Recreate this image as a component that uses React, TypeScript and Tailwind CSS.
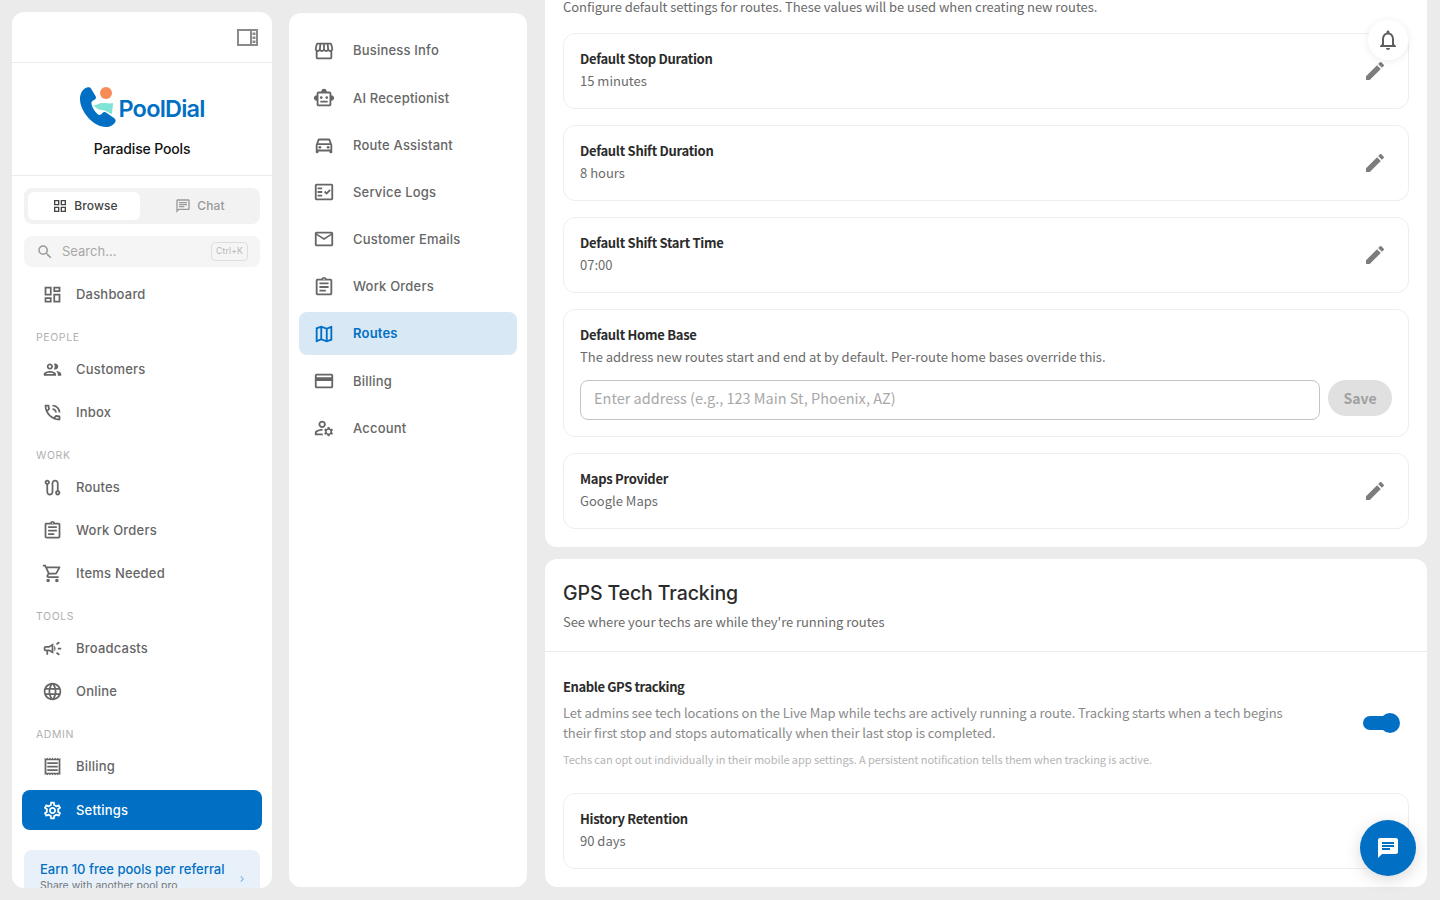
import React from 'react';
import {
  MdChat,
  MdChevronRight,
  MdCreditCard,
  MdEdit,
  MdOutlineAssignment,
  MdOutlineCampaign,
  MdOutlineChat,
  MdOutlineDashboard,
  MdOutlineDirectionsCar,
  MdOutlineFactCheck,
  MdOutlineGridView,
  MdOutlineLanguage,
  MdOutlineMail,
  MdOutlineManageAccounts,
  MdOutlineMap,
  MdOutlineNotifications,
  MdOutlinePeople,
  MdOutlinePhoneInTalk,
  MdOutlineReceipt,
  MdOutlineRoute,
  MdOutlineSettings,
  MdOutlineShoppingCart,
  MdOutlineSmartToy,
  MdOutlineStorefront,
  MdSearch,
} from 'react-icons/md';

const navGroups = [
  { label: 'PEOPLE', items: [{ name: 'Customers', icon: MdOutlinePeople }, { name: 'Inbox', icon: MdOutlinePhoneInTalk }] },
  {
    label: 'WORK',
    items: [
      { name: 'Routes', icon: MdOutlineRoute },
      { name: 'Work Orders', icon: MdOutlineAssignment },
      { name: 'Items Needed', icon: MdOutlineShoppingCart },
    ],
  },
  { label: 'TOOLS', items: [{ name: 'Broadcasts', icon: MdOutlineCampaign }, { name: 'Online', icon: MdOutlineLanguage }] },
];

const settingsNav = [
  { name: 'Business Info', icon: MdOutlineStorefront },
  { name: 'AI Receptionist', icon: MdOutlineSmartToy },
  { name: 'Route Assistant', icon: MdOutlineDirectionsCar },
  { name: 'Service Logs', icon: MdOutlineFactCheck },
  { name: 'Customer Emails', icon: MdOutlineMail },
  { name: 'Work Orders', icon: MdOutlineAssignment },
  { name: 'Routes', icon: MdOutlineMap, active: true },
  { name: 'Billing', icon: MdCreditCard },
  { name: 'Account', icon: MdOutlineManageAccounts },
];

function NavRow({ name, icon: Icon, active }: { name: string; icon: React.ElementType; active?: boolean }) {
  return (
    <a
      className={
        'flex h-10 items-center gap-[13px] rounded-lg px-5 text-[13px] font-medium tracking-[0.2px] ' +
        (active ? 'mt-px bg-[#006fc4] text-white' : 'text-[#666666]')
      }
    >
      <Icon size={21} />
      <span className={active ? 'mt-px' : 'mt-[2px]'}>{name}</span>
    </a>
  );
}

function NavLabel({ children }: { children: React.ReactNode }) {
  return <div className="h-8 pt-[17px] pl-[14px] text-[10.5px] leading-[13px] tracking-[0.6px] text-[#b0b0b0]">{children}</div>;
}

function Logo() {
  return (
    <div className="flex h-[42px] items-center">
      <svg width="40" height="42" viewBox="0 0 40 42" className="mr-[-1px]">
        <path
          d="M8 1.5C4 2.5 1 7 1 13C1 25 14 41 27 41C31 41 35 39 36.5 35.5C37 34 36 33 35 32L27 26.5C25.5 25.5 24 26 23 27.5C22 29 20 29.5 18.5 28C15.5 25 13 21.5 12.5 18C12 16 13 15 15 14C17 13 17.5 11.5 16.5 10L12 2.5C11 1 9.5 1 8 1.5Z"
          fill="#006fc4"
        />
        <circle cx="27" cy="7" r="6" fill="#f58b57" />
        <path d="M14 19C18 20 19 17 24 17C28 17 31 18 34 17C34 21 33 24 33 28C29 27 27 24 23 24C20 24 17 22 14 19Z" fill="#7fe3d6" />
      </svg>
      <span className="mt-[3px] text-[23.5px] leading-none font-semibold tracking-[-0.8px] text-[#006fc4]">PoolDial</span>
    </div>
  );
}

function Sidebar() {
  return (
    <aside className="my-3 flex w-[260px] shrink-0 flex-col overflow-hidden rounded-xl bg-white">
      <div className="flex h-[51px] shrink-0 items-center justify-end border-b border-[#ebebeb] pr-[14px]">
        <svg width="21" height="17" viewBox="0 0 21 17" fill="none">
          <rect x="1" y="1" width="19" height="15" stroke="#8a8a8a" strokeWidth="2" />
          <path d="M14 1V16" stroke="#8a8a8a" strokeWidth="2" />
          <path d="M17 3.5V6M17 7.5V10M17 11.5V14" stroke="#8a8a8a" strokeWidth="3" />
        </svg>
      </div>
      <div className="flex h-[113px] shrink-0 flex-col items-center border-b border-[#ebebeb] pt-[23px]">
        <Logo />
        <div className="mt-[11px] text-sm leading-[20px] font-medium tracking-[-0.15px] text-[#111111]">Paradise Pools</div>
      </div>
      <div className="mx-3 mt-3 flex h-9 shrink-0 items-center rounded-lg bg-[#f2f2f2] px-1">
        <div className="flex h-7 w-[112px] items-center justify-center gap-[6px] rounded-md bg-white pl-[2px] text-xs font-medium tracking-[0.1px] text-[#444444]">
          <MdOutlineGridView size={16} />
          Browse
        </div>
        <div className="flex h-7 flex-1 items-center justify-center gap-[6px] pl-1 text-xs font-medium tracking-[0.1px] text-[#999999]">
          <MdOutlineChat size={16} />
          Chat
        </div>
      </div>
      <div className="mx-3 mt-3 flex h-[31px] shrink-0 items-center rounded-lg bg-[#f5f5f5] pr-3 pl-3 text-[13px] text-[#a8a8a8]">
        <MdSearch size={18} className="text-[#9a9a9a]" />
        <span className="ml-2 flex-1">Search...</span>
        <span className="flex h-[19px] w-[37px] items-center justify-center rounded-[4px] border border-[#dedede] text-[8.5px] tracking-[0.2px] text-[#b5b5b5]">Ctrl+K</span>
      </div>
      <nav className="mx-[10px] mt-[7px] flex shrink-0 flex-col">
        <NavRow name="Dashboard" icon={MdOutlineDashboard} />
        {navGroups.map((group) => (
          <div key={group.label} className="flex flex-col gap-[3px]">
            <NavLabel>{group.label}</NavLabel>
            {group.items.map((item) => (
              <NavRow key={item.name} {...item} />
            ))}
          </div>
        ))}
        <div className="flex flex-col gap-[3px]">
          <NavLabel>ADMIN</NavLabel>
          <NavRow name="Billing" icon={MdOutlineReceipt} />
          <NavRow name="Settings" icon={MdOutlineSettings} active />
        </div>
      </nav>
      <div className="relative mx-3 mt-5 shrink-0 rounded-lg bg-[#e8f1fa] px-4 py-[10px]">
        <div className="text-[13px] leading-[18px] font-medium text-[#006fc4]">Earn 10 free pools per referral</div>
        <div className="text-[10.5px] leading-[16px] text-[#777777]">Share with another pool pro</div>
        <MdChevronRight size={12} className="absolute top-[23px] right-3 text-[#7fb2e0]" />
      </div>
    </aside>
  );
}

function SettingsNav() {
  return (
    <div className="my-[13px] ml-[17px] flex w-[238px] shrink-0 flex-col gap-1 rounded-xl bg-white px-[10px] pt-4">
      {settingsNav.map(({ name, icon: Icon, active }) => (
        <a
          key={name}
          className={
            'flex h-[43.2px] items-center gap-[18px] rounded-lg pl-[14px] text-[13px] tracking-[0.2px] ' +
            (active ? 'bg-[#d9e8f5] font-semibold text-[#006fc4]' : 'font-medium text-[#666666]')
          }
        >
          <Icon size={22} />
          <span className="mt-px">{name}</span>
        </a>
      ))}
    </div>
  );
}

function SettingRow({ title, value }: { title: string; value: string }) {
  return (
    <div className="flex h-[76px] items-center rounded-xl border border-[#eeeeee] pr-[5px] pl-4 text-[13px]">
      <div className="flex-1 pb-[2px]">
        <div className="leading-[22px] font-semibold tracking-[-0.28px] text-[#2b2b2b]">{title}</div>
        <div className="leading-[22px] text-[#6b6b6b]">{value}</div>
      </div>
      <div className="mr-[16px]">
        <MdEdit size={24} className="text-[#7d7d7d]" />
      </div>
    </div>
  );
}

function Main() {
  return (
    <main className="mb-[13px] ml-[18px] w-[882px] shrink-0 overflow-hidden rounded-b-xl font-['Noto_Sans_CJK_JP','Noto_Sans',sans-serif]">
      <section className="rounded-b-xl bg-white px-[18px] pb-[18px]">
        <p className="-mt-[3px] mb-[16px] h-[20px] text-[13px] leading-[20px] tracking-[-0.045px] text-[#6b6b6b]">
          Configure default settings for routes. These values will be used when creating new routes.
        </p>
        <div className="flex flex-col gap-4">
          <SettingRow title="Default Stop Duration" value="15 minutes" />
          <SettingRow title="Default Shift Duration" value="8 hours" />
          <SettingRow title="Default Shift Start Time" value="07:00" />
          <div className="h-[128px] rounded-xl border border-[#eeeeee] px-4 pt-[14px] text-[13px]">
            <div className="leading-[22px] font-semibold tracking-[-0.28px] text-[#2b2b2b]">Default Home Base</div>
            <div className="leading-[22px] tracking-[-0.01px] text-[#6b6b6b]">The address new routes start and end at by default. Per-route home bases override this.</div>
            <div className="mt-3 flex items-start gap-2">
              <div className="flex h-10 flex-1 items-center rounded-lg border border-[#c4c4c4] px-[13px] pb-1 text-[14.5px] leading-[22px] text-[#a8a8a8]">
                Enter address (e.g., 123 Main St, Phoenix, AZ)
              </div>
              <div className="flex h-9 w-16 items-center justify-center rounded-full bg-[#e0e0e0] text-sm font-semibold text-[#a0a0a0]">Save</div>
            </div>
          </div>
          <SettingRow title="Maps Provider" value="Google Maps" />
        </div>
      </section>
      <section className="mt-3 rounded-xl bg-white pb-[18px]">
        <div className="h-[93px] border-b border-[#ebebeb] px-[18px] pt-[19px]">
          <h2 className="font-['Inter',sans-serif] text-[19.5px] leading-[30px] font-medium tracking-[-0.1px] text-[#2b2b2b]">GPS Tech Tracking</h2>
          <p className="mt-[4px] text-[13px] leading-[20px] tracking-[-0.05px] text-[#6b6b6b]">See where your techs are while they're running routes</p>
        </div>
        <div className="px-[18px] pt-[25px]">
          <div className="flex">
            <div className="w-[730px]">
              <div className="text-[13px] leading-[20px] font-semibold tracking-[-0.4px] text-[#2b2b2b]">Enable GPS tracking</div>
              <p className="mt-[6px] text-[13px] leading-[20px] tracking-[-0.076px] text-[#8a8a8a]">
                Let admins see tech locations on the Live Map while techs are actively running a route. Tracking starts when a tech begins their first stop and stops automatically when their last stop is completed.
              </p>
              <p className="mt-[7px] whitespace-nowrap text-[11px] leading-[18px] tracking-[-0.07px] text-[#b5b5b5]">
                Techs can opt out individually in their mobile app settings. A persistent notification tells them when tracking is active.
              </p>
            </div>
            <div className="relative mt-[39px] ml-[70px] h-[14px] w-[34px] rounded-full bg-[#006fc4]">
              <div className="absolute -top-[3px] -right-[3px] size-5 rounded-full bg-[#006fc4]" />
            </div>
          </div>
          <div className="mt-[25px]">
            <SettingRow title="History Retention" value="90 days" />
          </div>
        </div>
      </section>
    </main>
  );
}

export default function App() {
  return (
    <div className="relative flex h-[900px] w-[1440px] overflow-hidden bg-[#ebebeb] pl-3 font-['Inter',sans-serif]">
      <Sidebar />
      <SettingsNav />
      <Main />
      <button className="absolute top-5 left-[1368px] flex size-10 items-center justify-center rounded-full bg-white text-[#5f5f5f] shadow-[0_1px_8px_rgba(0,0,0,0.08)]">
        <MdOutlineNotifications size={24} />
      </button>
      <button className="absolute top-[820px] left-[1360px] flex size-14 items-center justify-center rounded-full bg-[#006fc4] text-white shadow-[0_4px_16px_rgba(0,0,0,0.15)]">
        <MdChat size={24} />
      </button>
    </div>
  );
}
